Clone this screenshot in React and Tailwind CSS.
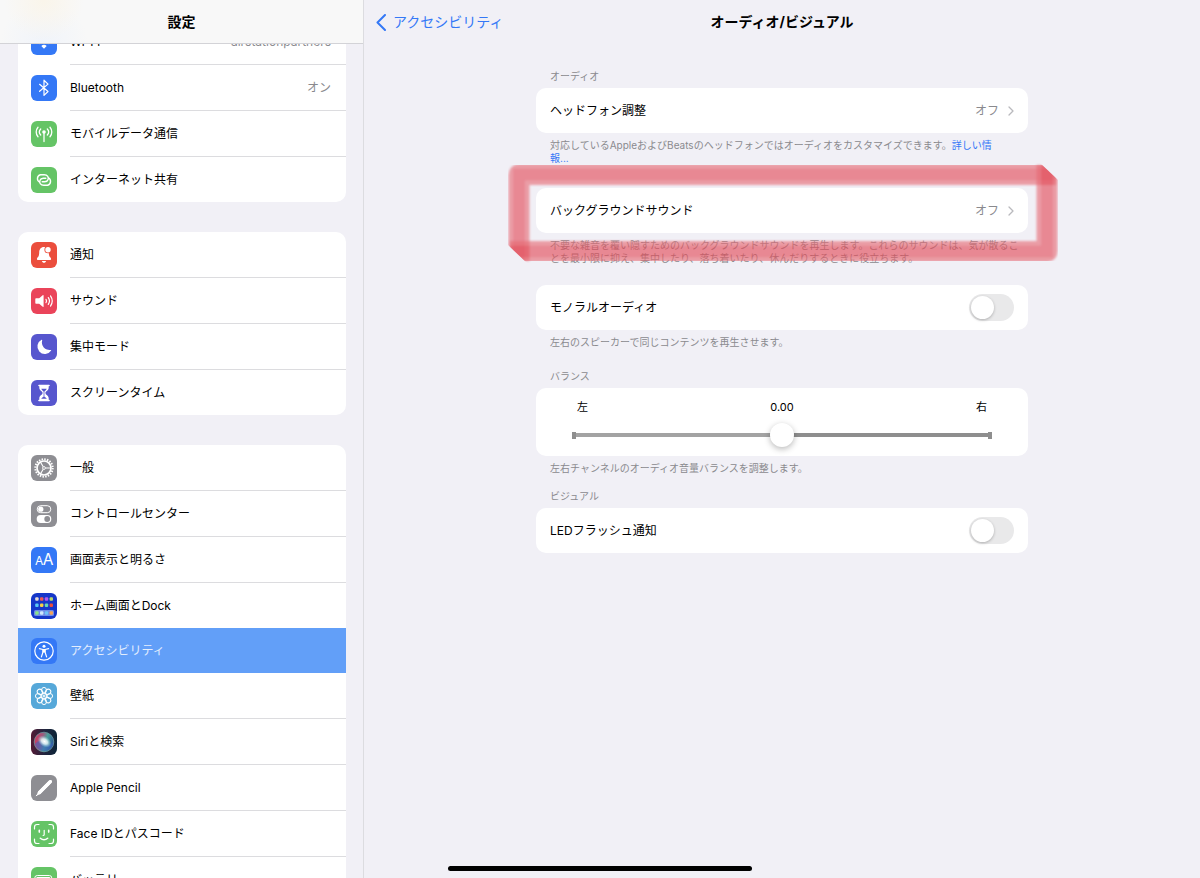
import React, { useState } from "react";

const BLUE = "#3478f6";
const GREEN = "#65c466";
const RED = "#eb4e3d";
const PINK = "#ea445a";
const INDIGO = "#5756ce";
const GRAY = "#8e8e93";

function Tile({ fill, children }) {
  return (
    <svg viewBox="0 0 26 26" className="h-[26px] w-[26px] shrink-0" aria-hidden="true">
      <rect width="26" height="26" rx="6" fill={fill} />
      {children}
    </svg>
  );
}

const line = { fill: "none", stroke: "#fff", strokeLinecap: "round", strokeLinejoin: "round" };

function WifiIcon() {
  return (
    <Tile fill={BLUE}>
      <g {...line} strokeWidth="2" strokeLinecap="butt">
        <path d="M4.500 11.500a12 12 0 0 1 17 0" />
        <path d="M7.500 14.500a8 8 0 0 1 11 0" />
      </g>
      <path d="M10.300 17a4 4 0 0 1 5.400 0L13 19.800z" fill="#fff" />
    </Tile>
  );
}

function BluetoothIcon() {
  return (
    <Tile fill={BLUE}>
      <path d="M8.600 9.300l8.400 7.200-4 3.900V5.200l4 3.900-8.400 7.200" {...line} strokeWidth="1.200" />
    </Tile>
  );
}

function CellularIcon() {
  return (
    <Tile fill={GREEN}>
      <circle cx="13" cy="11" r="1.800" fill="#fff" />
      <g {...line} strokeWidth="1.300">
        <path d="M13 11v9.600" />
        <path d="M9.700 14a4.400 4.400 0 0 1 0-6M16.300 14a4.400 4.400 0 0 0 0-6" />
        <path d="M7 15.800a7.300 7.300 0 0 1 0-9.600M19 15.800a7.300 7.300 0 0 0 0-9.600" />
      </g>
    </Tile>
  );
}

function HotspotIcon() {
  const link = "M8.600 15.100a4 4 0 0 1 .8-7.400h3.800c3.400 0 4.800 2.600 3.900 4.900-.5 1.400-1.700 2.200-3.300 2.200h-2.600";
  return (
    <Tile fill={GREEN}>
      <g {...line} strokeWidth="1.400">
        <path d={link} />
        <path d={link} transform="rotate(180 13 13)" />
      </g>
    </Tile>
  );
}

function BellIcon() {
  return (
    <Tile fill={RED}>
      <path
        d="M13 5c-3.300 0-4.700 2.400-4.800 5.500-.1 3-.6 3.900-1.700 5.100-.8.9-.9 2.300.7 2.300h11.600c1.600 0 1.500-1.400.7-2.300-1.100-1.200-1.600-2.100-1.700-5.100C17.700 7.400 16.300 5 13 5z"
        fill="#fff"
      />
      <path d="M10.900 19h4.200c-.3 1.200-1.100 1.800-2.100 1.800s-1.800-.6-2.100-1.800z" fill="#fff" />
      <circle cx="17" cy="7.700" r="3.600" fill={RED} />
      <circle cx="17" cy="7.700" r="2.700" fill="#fff" />
    </Tile>
  );
}

function SoundIcon() {
  return (
    <Tile fill={PINK}>
      <path
        d="M5.300 10.300h2.900l3.500-3.100c.4-.3.900-.1.900.4v10.800c0 .5-.5.700-.9.400l-3.500-3.100H5.300c-.6 0-1-.4-1-1v-3.400c0-.6.4-1 1-1z"
        fill="#fff"
      />
      <g {...line} strokeWidth="1.200">
        <path d="M15 11.300a3 3 0 0 1 0 3.400" />
        <path d="M17.300 9.600a6 6 0 0 1 0 6.800" />
        <path d="M19.500 7.900a9 9 0 0 1 0 10.200" />
      </g>
    </Tile>
  );
}

function MoonIcon() {
  return (
    <Tile fill={INDIGO}>
      <path
        d="M10.600 5.700c.4-.2.700.1.600.5a7.600 7.600 0 0 0 8.500 9.700c.4-.1.700.3.500.6a7.500 7.500 0 1 1-9.600-10.800z"
        fill="#fff"
      />
    </Tile>
  );
}

function HourglassIcon() {
  return (
    <Tile fill={INDIGO}>
      <path
        d="M8.300 5.500h9.400v2.300c0 2.700-3.300 3.500-3.300 5.200s3.300 2.500 3.300 5.200v2.300H8.300v-2.300c0-2.700 3.300-3.500 3.300-5.200S8.300 10.500 8.300 7.800z"
        fill="#fff"
      />
      <path d="M8 5.500h10M8 20.500h10" {...line} strokeWidth="1.600" />
      <path d="M10.300 8.700h5.400c-.4 1.300-2 2-2.200 3.300v4.600l2.400 2.100h-5.800l2.400-2.100V12c-.2-1.300-1.800-2-2.200-3.300z" fill={INDIGO} />
      <path d="M13 11v6" stroke="#fff" strokeWidth=".5" />
    </Tile>
  );
}

function GearIcon() {
  return (
    <Tile fill={GRAY}>
      <g fill="none" stroke="#fff">
        <circle cx="13" cy="13" r="8.700" strokeWidth="2" strokeDasharray="1.500 1.232" />
        <circle cx="13" cy="13" r="7" strokeWidth="1.700" />
        <circle cx="13" cy="13" r="1.400" strokeWidth=".9" />
        <path d="M14.500 13H20M12.200 11.700L9.300 6.700M12.200 14.300l-2.900 5" strokeWidth="1.100" />
      </g>
    </Tile>
  );
}

function ControlCenterIcon() {
  return (
    <Tile fill={GRAY}>
      <rect x="6.200" y="4.700" width="13.600" height="7" rx="3.500" fill="none" stroke="#fff" strokeWidth="1" />
      <circle cx="9.800" cy="8.200" r="2.600" fill="#fff" />
      <rect x="5.700" y="14" width="14.600" height="8" rx="4" fill="#fff" />
      <circle cx="16.200" cy="18" r="2.900" fill={GRAY} />
    </Tile>
  );
}

function DisplayIcon() {
  return (
    <Tile fill={BLUE}>
      <g fill="#fff" className="font-[Inter,sans-serif]">
        <text x="4" y="18.300" fontSize="12">A</text>
        <text x="11.800" y="18.300" fontSize="15.500">A</text>
      </g>
    </Tile>
  );
}

const homeDots = [
  ["#e8dcd8", "#ef5a50", "#b45cf0", "#b9d86a"],
  ["#5cc8f4", "#f7cf46", "#63d9b4", "#ee4c3c"],
  ["#8ae58a", "#cfe8fb", "#6fc4f7", "#f2a257"],
];

function HomeIcon() {
  return (
    <Tile fill="#1637c9">
      <rect x="3" y="17" width="20" height="6" rx="1.500" fill="#6f8ce8" />
      {homeDots.map((dots, r) =>
        dots.map((color, c) => (
          <rect
            key={r + "-" + c}
            x={4.2 + c * 4.8}
            y={[4.3, 10.5, 18.3][r]}
            width="3.400"
            height="3.400"
            rx="1"
            fill={color}
          />
        ))
      )}
    </Tile>
  );
}

function AccessibilityIcon() {
  return (
    <Tile fill={BLUE}>
      <circle cx="13" cy="13" r="9.200" fill="none" stroke="#fff" strokeWidth="1.200" />
      <circle cx="13" cy="8.200" r="1.500" fill="#fff" />
      <path d="M8.400 10.700l3.500.8v2.700l-1.500 4.700M17.600 10.700l-3.500.8v2.700l1.500 4.700" {...line} strokeWidth="1.200" />
      <path d="M11.600 11h2.800v3.500h-2.800z" fill="#fff" />
    </Tile>
  );
}

function WallpaperIcon() {
  return (
    <Tile fill="#56a8d9">
      <g fill="none" stroke="#fff" strokeWidth="1">
        {[0, 45, 90, 135, 180, 225, 270, 315].map((a) => (
          <ellipse key={a} cx="13" cy="7.300" rx="2.500" ry="2.900" transform={`rotate(${a} 13 13)`} />
        ))}
        <circle cx="13" cy="13" r="3" />
        <path d="M13 10v6M10 13h6M10.900 10.900l4.200 4.200M15.100 10.900l-4.200 4.200" strokeWidth=".6" />
      </g>
    </Tile>
  );
}

function SiriIcon() {
  return (
    <Tile fill="url(#siriBg)">
      <defs>
        <linearGradient id="siriBg" x1="0" x2="1" y1="0" y2="0">
          <stop offset="0" stopColor="#541a35" />
          <stop offset=".5" stopColor="#23253f" />
          <stop offset="1" stopColor="#0b2437" />
        </linearGradient>
        <linearGradient id="siriOrb" x1="0" x2="1" y1=".3" y2=".6">
          <stop offset="0" stopColor="#d3365e" />
          <stop offset=".35" stopColor="#9d5a7e" />
          <stop offset=".6" stopColor="#4aa09b" />
          <stop offset="1" stopColor="#2a4f93" />
        </linearGradient>
        <radialGradient id="siriGlow">
          <stop offset="0" stopColor="#fff" />
          <stop offset=".45" stopColor="#e6f5f8" stopOpacity=".85" />
          <stop offset="1" stopColor="#8fd6de" stopOpacity="0" />
        </radialGradient>
      </defs>
      <circle cx="13" cy="13" r="9.800" fill="url(#siriOrb)" />
      <circle cx="13" cy="13" r="9.800" fill="none" stroke="#6fa3a8" strokeWidth=".7" />
      <path d="M4 15c4-5 8-3 10-1s5 3 8-1c0 5-4 9-9 9-4 0-8-3-9-7z" fill="#3c62c4" opacity=".55" />
      <ellipse cx="13.500" cy="12.500" rx="7.500" ry="5.200" fill="url(#siriGlow)" transform="rotate(35 13.500 12.500)" />
    </Tile>
  );
}

function PencilIcon() {
  return (
    <Tile fill={GRAY}>
      <path d="M18.300 5.600c.8-.8 1.700-.8 2.300-.2s.6 1.500-.2 2.300L9.200 18.900l-3.100 1.500-.5-.5 1.500-3.100z" fill="#fff" />
      <path d="M19.200 6.800L8.500 17.500" {...line} strokeWidth="3.400" />
      <path d="M5.200 20.800l1-1" {...line} strokeWidth="1" />
    </Tile>
  );
}

function FaceIdIcon() {
  return (
    <Tile fill={GREEN}>
      <g {...line} strokeWidth="1.200">
        <path d="M3.500 8V6A2.500 2.500 0 0 1 6 3.500h2M18 3.500h2A2.500 2.500 0 0 1 22.500 6v2M22.500 18v2a2.500 2.500 0 0 1-2.500 2.500h-2M8 22.500H6A2.500 2.500 0 0 1 3.500 20v-2" />
        <path d="M8.300 9.300v1.800M17.700 9.300v1.800" strokeWidth="1.600" />
        <path d="M13.200 9.300v4.200c0 .7-.4 1-1.100 1" />
        <path d="M9.300 17.200c2.200 1.900 5.200 1.900 7.400 0" strokeWidth="1.500" />
      </g>
    </Tile>
  );
}

function BatteryIcon() {
  return (
    <Tile fill={GREEN}>
      <rect x="3.800" y="8.500" width="17" height="9" rx="2.500" fill="none" stroke="#fff" strokeWidth="1" />
      <rect x="5.300" y="10" width="14" height="6" rx="1.200" fill="#fff" />
      <path d="M22.200 11.500v3" {...line} strokeWidth="1.200" />
    </Tile>
  );
}

const groups = [
  [
    { label: "Wi-Fi", value: "airstationpartners", icon: WifiIcon },
    { label: "Bluetooth", value: "オン", icon: BluetoothIcon },
    { label: "モバイルデータ通信", icon: CellularIcon },
    { label: "インターネット共有", icon: HotspotIcon },
  ],
  [
    { label: "通知", icon: BellIcon },
    { label: "サウンド", icon: SoundIcon },
    { label: "集中モード", icon: MoonIcon },
    { label: "スクリーンタイム", icon: HourglassIcon },
  ],
  [
    { label: "一般", icon: GearIcon },
    { label: "コントロールセンター", icon: ControlCenterIcon },
    { label: "画面表示と明るさ", icon: DisplayIcon },
    { label: "ホーム画面とDock", icon: HomeIcon, last: true },
    { label: "アクセシビリティ", icon: AccessibilityIcon, selected: true, last: true },
    { label: "壁紙", icon: WallpaperIcon },
    { label: "Siriと検索", icon: SiriIcon },
    { label: "Apple Pencil", icon: PencilIcon },
    { label: "Face IDとパスコード", icon: FaceIdIcon },
    { label: "バッテリー", icon: BatteryIcon },
  ],
];

function SidebarRow({ item, divider }) {
  const Icon = item.icon;
  return (
    <li>
      <a
        href="#"
        className={
          item.selected
            ? "flex h-[45px] items-center gap-[13px] bg-[#629ff8] pl-[13px] pr-[15px] text-[#e3edfd]"
            : "flex h-[45px] items-center gap-[13px] pl-[13px] pr-[15px]"
        }
      >
        <Icon />
        <span className="flex-1">{item.label}</span>
        {item.value && <span className="text-[#8a8a8e]">{item.value}</span>}
      </a>
      {divider && <div className="ml-[52px] h-px bg-[#dcdcdf]" />}
    </li>
  );
}

function Sidebar() {
  return (
    <aside className="flex w-[364px] shrink-0 flex-col border-r border-[#dcdce0]">
      <header className="flex h-11 shrink-0 items-center justify-center border-b border-[#d3d3d7] bg-[#f8f8f8] bg-[radial-gradient(circle_at_44px_0px,#faf5ea_0px,transparent_40px),radial-gradient(circle_at_44px_44px,#f0f4fa_0px,transparent_44px)]">
        <h1 className="text-sm font-bold">設定</h1>
      </header>
      <nav className="min-h-0 flex-1 overflow-hidden pl-[18px] pr-[17px]">
        {/* list is scrolled a little under the header */}
        <div className="-mt-[25px] flex flex-col gap-[30px]">
          {groups.map((items, g) => (
            <ul key={g} className="overflow-hidden rounded-[10px] bg-white">
              {items.map((item, i) => (
                <SidebarRow key={item.label} item={item} divider={!item.last && i < items.length - 1} />
              ))}
            </ul>
          ))}
        </div>
      </nav>
    </aside>
  );
}

function Chevron() {
  return (
    <svg viewBox="0 0 6 10" className="h-[10px] w-[6px]" aria-hidden="true">
      <path d="M1 1l4 4-4 4" fill="none" stroke="#b9b9bd" strokeWidth="1.300" strokeLinecap="round" strokeLinejoin="round" />
    </svg>
  );
}

function LinkRow({ label, value }) {
  return (
    <a href="#" className="flex h-[45px] items-center rounded-[10px] bg-white px-[14px]">
      <span className="flex-1">{label}</span>
      <span className="mr-[9px] text-[#8a8a8e]">{value}</span>
      <Chevron />
    </a>
  );
}

function ToggleRow({ label }) {
  const [on, setOn] = useState(false);

  return (
    <label className="flex h-[45px] items-center rounded-[10px] bg-white px-[14px]">
      <span className="flex-1">{label}</span>
      <input
        type="checkbox"
        role="switch"
        checked={on}
        onChange={(e) => setOn(e.target.checked)}
        className="h-[27px] w-[45px] appearance-none rounded-full bg-[#e9e9ea] p-[2px] before:block before:h-[23px] before:w-[23px] before:rounded-full before:bg-white before:shadow-[0_1px_3px_rgba(0,0,0,0.25)] checked:bg-[#65c466] checked:before:ml-[18px]"
      />
    </label>
  );
}

function Caption({ children }) {
  return <h3 className="pb-[5px] pl-[14px] text-[10px] leading-[13px] text-[#8a8a8e]">{children}</h3>;
}

function Note({ children }) {
  return <p className="pl-[14px] pr-2 pt-[6px] text-[10px] leading-[13px] text-[#8a8a8e]">{children}</p>;
}

/* marker frame, two L shaped strokes that cross at opposite corners */
function MarkerFrame() {
  return (
    <svg
      viewBox="0 0 550 100"
      className="pointer-events-none absolute -left-7 -top-[25px] h-[100px] w-[550px]"
      aria-hidden="true"
    >
      <defs>
        <filter id="soft" x="-5%" y="-10%" width="110%" height="120%">
          <feGaussianBlur stdDeviation="1" />
        </filter>
        <clipPath id="cut">
          <path d="M0 0h532l18 17v83H19L0 82z" />
        </clipPath>
      </defs>
      <g clipPath="url(#cut)" fill="none">
        <g opacity=".62" filter="url(#soft)">
          <path d="M11 98V11.500h537" stroke="#e66a74" strokeWidth="21" strokeLinejoin="round" />
          <path d="M11 98V11.500h537" stroke="#e24a57" strokeWidth="12" />
        </g>
        <g opacity=".62" filter="url(#soft)">
          <path d="M2 88.500h537V2" stroke="#e66a74" strokeWidth="21" strokeLinejoin="round" />
          <path d="M2 88.500h537V2" stroke="#e24a57" strokeWidth="12" />
        </g>
      </g>
    </svg>
  );
}

function BalanceCard() {
  const [balance, setBalance] = useState(0);

  return (
    <div className="rounded-[10px] bg-white px-9 pb-[9px] pt-[11px]">
      <div className="flex items-center justify-between px-[5px] text-[11px] leading-4">
        <span>左</span>
        <output htmlFor="balance">{balance.toFixed(2)}</output>
        <span>右</span>
      </div>
      <input
        id="balance"
        type="range"
        min="-1"
        max="1"
        step="0.01"
        value={balance}
        aria-label="バランス"
        onChange={(e) => setBalance(Number(e.target.value))}
        className="mt-[8px] block h-6 w-full appearance-none [background:linear-gradient(#8e8e8e,#8e8e8e)_left/4px_7px_no-repeat,linear-gradient(#8e8e8e,#8e8e8e)_right/4px_7px_no-repeat,linear-gradient(90deg,#a3a3a3_50%,#8e8e8e_50%)_center/100%_4px_no-repeat] [&::-webkit-slider-thumb]:h-6 [&::-webkit-slider-thumb]:w-6 [&::-webkit-slider-thumb]:appearance-none [&::-webkit-slider-thumb]:rounded-full [&::-webkit-slider-thumb]:bg-white [&::-webkit-slider-thumb]:shadow-[0_2px_6px_rgba(0,0,0,0.28)]"
      />
    </div>
  );
}

function AudioVisualPage() {
  return (
    <main className="flex min-w-0 flex-1 flex-col">
      <header className="grid h-11 shrink-0 grid-cols-[1fr_auto_1fr] items-center px-3 text-sm">
        <a href="#" className="flex items-center gap-[7px] text-[#3478f6]">
          <svg viewBox="0 0 10 17" className="h-[17px] w-[10px]" aria-hidden="true">
            <path d="M9 1L1.500 8.500 9 16" fill="none" stroke="#3478f6" strokeWidth="2" strokeLinecap="round" strokeLinejoin="round" />
          </svg>
          アクセシビリティ
        </a>
        <h2 className="font-bold">オーディオ/ビジュアル</h2>
      </header>

      <div className="mx-auto w-full max-w-[492px] pt-[26px]">
        <section>
          <Caption>オーディオ</Caption>
          <LinkRow label="ヘッドフォン調整" value="オフ" />
          <Note>
            対応しているAppleおよびBeatsのヘッドフォンではオーディオをカスタマイズできます。
            <a href="#" className="text-[#3478f6]">
              詳しい情
              <br />
              報...
            </a>
          </Note>
        </section>

        <section className="relative mt-[23px]">
          <LinkRow label="バックグラウンドサウンド" value="オフ" />
          <Note>
            不要な雑音を覆い隠すためのバックグラウンドサウンドを再生します。これらのサウンドは、気が散ることを最小限に抑え、集中したり、落ち着いたり、休んだりするときに役立ちます。
          </Note>
          <MarkerFrame />
        </section>

        <section className="mt-5">
          <ToggleRow label="モノラルオーディオ" />
          <Note>左右のスピーカーで同じコンテンツを再生させます。</Note>
        </section>

        <section className="mt-[21px]">
          <Caption>バランス</Caption>
          <BalanceCard />
          <Note>左右チャンネルのオーディオ音量バランスを調整します。</Note>
        </section>

        <section className="mt-[15px]">
          <Caption>ビジュアル</Caption>
          <ToggleRow label="LEDフラッシュ通知" />
        </section>
      </div>
    </main>
  );
}

export default function App() {
  return (
    <div
      lang="ja"
      className="relative flex h-screen overflow-hidden bg-[#f1f0f6] font-[Inter,'Noto_Sans_CJK_JP',sans-serif] text-xs text-black"
    >
      <Sidebar />
      <AudioVisualPage />
      <div className="absolute bottom-[7px] left-1/2 h-[5px] w-[304px] -translate-x-1/2 rounded-full bg-black" />
    </div>
  );
}
